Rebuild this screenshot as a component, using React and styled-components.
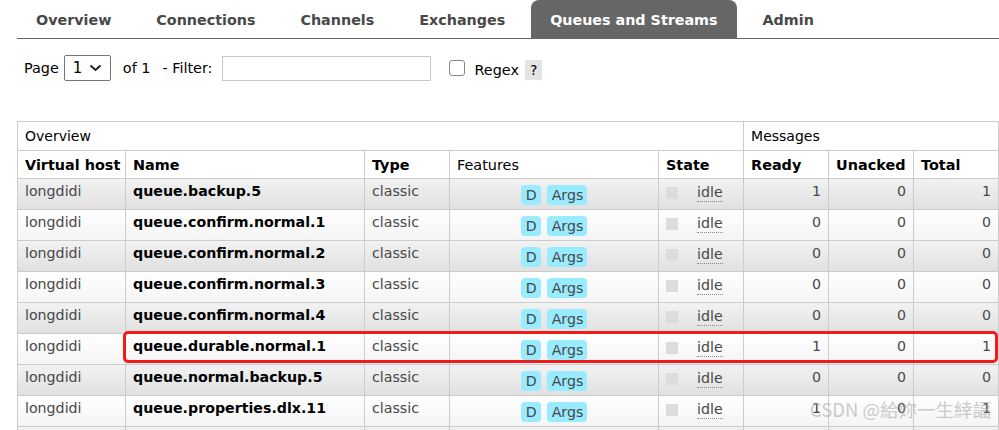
import React from 'react';
import styled, { createGlobalStyle } from 'styled-components';

const GlobalStyle = createGlobalStyle`
  html, body {
    margin: 0;
    padding: 0;
    background: #fff;
  }
  body {
    font-family: Verdana, "DejaVu Sans", sans-serif;
    color: #000;
  }
`;

const tabs = ['Overview', 'Connections', 'Channels', 'Exchanges', 'Queues and Streams', 'Admin'];

const queues = [
  { name: 'queue.backup.5', ready: 1, unacked: 0, total: 1 },
  { name: 'queue.confirm.normal.1', ready: 0, unacked: 0, total: 0 },
  { name: 'queue.confirm.normal.2', ready: 0, unacked: 0, total: 0 },
  { name: 'queue.confirm.normal.3', ready: 0, unacked: 0, total: 0 },
  { name: 'queue.confirm.normal.4', ready: 0, unacked: 0, total: 0 },
  { name: 'queue.durable.normal.1', ready: 1, unacked: 0, total: 1 },
  { name: 'queue.normal.backup.5', ready: 0, unacked: 0, total: 0 },
  { name: 'queue.properties.dlx.11', ready: 1, unacked: 0, total: 1 },
  { name: 'queue.properties.dlx.12', ready: 0, unacked: 0, total: 0 },
];

const App = () => (
  <>
    <GlobalStyle />
    <Page>
      <TabBar>
        {tabs.map((t) => (
          <Tab key={t} active={t === 'Queues and Streams'}>{t}</Tab>
        ))}
      </TabBar>

      <FilterRow>
        <span>Page</span>
        <Select>
          <span>1</span>
          <svg width="13" height="8" viewBox="0 0 13 8">
            <path d="M1.5 1.5 L6.5 6 L11.5 1.5" fill="none" stroke="#222" strokeWidth="2" />
          </svg>
        </Select>
        <OfText>of 1</OfText>
        <span>- Filter:</span>
        <FilterInput />
        <Check />
        <RegexLabel>Regex</RegexLabel>
        <Help>?</Help>
      </FilterRow>

      <TableWrap>
        <Table>
          <colgroup>
            <col style={{ width: 108 }} />
            <col style={{ width: 239 }} />
            <col style={{ width: 85 }} />
            <col style={{ width: 209 }} />
            <col style={{ width: 85 }} />
            <col style={{ width: 85 }} />
            <col style={{ width: 85 }} />
            <col style={{ width: 85 }} />
          </colgroup>
          <thead>
            <GroupRow>
              <GroupTh colSpan={5}>Overview</GroupTh>
              <GroupTh colSpan={3}>Messages</GroupTh>
            </GroupRow>
            <HeadRow>
              <Th>Virtual host</Th>
              <Th>Name</Th>
              <Th>Type</Th>
              <Th light>Features</Th>
              <Th>State</Th>
              <Th>Ready</Th>
              <Th>Unacked</Th>
              <Th>Total</Th>
            </HeadRow>
          </thead>
          <tbody>
            {queues.map((q, i) => (
              <Row key={q.name} odd={i % 2 === 0}>
                <Td>longdidi</Td>
                <NameTd>{q.name}</NameTd>
                <Td>classic</Td>
                <FeatTd>
                  <Badge>D</Badge>
                  <Badge>Args</Badge>
                </FeatTd>
                <Td>
                  <StateCell>
                    <StateBox />
                    <Idle>idle</Idle>
                  </StateCell>
                </Td>
                <NumTd>{q.ready}</NumTd>
                <NumTd>{q.unacked}</NumTd>
                <NumTd>{q.total}</NumTd>
              </Row>
            ))}
          </tbody>
        </Table>
        <Highlight />
        <Watermark>CSDN @給妳一生緈諨</Watermark>
      </TableWrap>
    </Page>
  </>
);

export default App;

const Page = styled.div`
  width: 999px;
  height: 430px;
  overflow: hidden;
  padding-left: 17px;
  box-sizing: border-box;
`;

const TabBar = styled.div`
  display: flex;
  align-items: flex-end;
  height: 38px;
  border-bottom: 1px solid #666;
`;

const Tab = styled.div`
  height: 38px;
  box-sizing: border-box;
  padding: 12px 19px 0;
  margin-right: 7px;
  font-size: 14.3px;
  font-weight: bold;
  color: ${(p) => (p.active ? '#fff' : '#484848')};
  background: ${(p) => (p.active ? '#666' : 'transparent')};
  border-radius: 8px 8px 0 0;
  white-space: nowrap;
`;

const FilterRow = styled.div`
  display: flex;
  align-items: center;
  height: 60px;
  padding: 0 0 2px 7px;
  box-sizing: border-box;
  font-size: 14.4px;
  color: #000;
`;

const Select = styled.div`
  display: flex;
  align-items: center;
  justify-content: space-between;
  width: 47px;
  height: 26px;
  box-sizing: border-box;
  border: 1px solid #767676;
  border-radius: 2px;
  margin: 0 12px 0 5px;
  padding: 0 8px;
  font-size: 15px;
`;

const OfText = styled.span`
  margin-right: 12px;
`;

const FilterInput = styled.div`
  width: 209px;
  height: 25px;
  box-sizing: border-box;
  border: 1px solid #c8c8c8;
  margin-left: 10px;
`;

const Check = styled.div`
  width: 16px;
  height: 16px;
  box-sizing: border-box;
  border: 1.5px solid #888;
  border-radius: 3px;
  margin: 0 9px 0 18px;
`;

const RegexLabel = styled.span`
  margin-top: 4px;
`;

const Help = styled.span`
  background: #e4e4e4;
  padding: 2px 5px;
  margin-left: 6px;
  margin-top: 4px;
  font-size: 14px;
`;

const TableWrap = styled.div`
  position: relative;
  margin-top: 22px;
`;

const Table = styled.table`
  border-collapse: collapse;
  table-layout: fixed;
  width: 981px;
  font-size: 14.2px;
`;

const GroupRow = styled.tr`
  height: 29px;
`;

const HeadRow = styled.tr`
  height: 28px;
`;

const GroupTh = styled.th`
  text-align: left;
  font-weight: normal;
  padding: 0 7px;
  border: 1px solid #ccc;
  font-size: 14px;
`;

const Th = styled.th`
  text-align: left;
  font-weight: ${(p) => (p.light ? 'normal' : 'bold')};
  padding: 1px 7px 0;
  border: 1px solid #ccc;
  white-space: nowrap;
  font-size: 14.4px;
`;

const Row = styled.tr`
  height: 31px;
  background: ${(p) =>
    p.odd ? 'linear-gradient(#f2f2f2, #e0e0e0)' : 'linear-gradient(#fff, #f4f4f4)'};
`;

const Td = styled.td`
  border: 1px solid #ccc;
  padding: 0 7px 6px;
  color: #484848;
  white-space: nowrap;
  vertical-align: middle;
`;

const NameTd = styled(Td)`
  color: #000;
  font-weight: bold;
  font-size: 14.2px;
`;

const FeatTd = styled(Td)`
  text-align: center;
  padding-bottom: 0;
  padding-top: 2px;
`;

const NumTd = styled(Td)`
  text-align: right;
`;

const Badge = styled.span`
  display: inline-block;
  background: #99ebff;
  color: #484848;
  border-radius: 4px;
  padding: 2px 4px 2px 5px;
  margin: 0 3px;
  font-size: 14.2px;
`;

const StateCell = styled.div`
  display: flex;
  align-items: center;
  gap: 19px;
`;

const StateBox = styled.span`
  width: 12px;
  height: 12px;
  background: #dcdcdc;
  margin-top: 4px;
`;

const Idle = styled.span`
  border-bottom: 1px dotted #888;
  color: #484848;
  margin-top: 4px;
  line-height: 1.15;
`;

const Highlight = styled.div`
  position: absolute;
  left: 106px;
  top: 210px;
  width: 875px;
  height: 32px;
  box-sizing: border-box;
  border: 3px solid #f01c1c;
  border-radius: 5px;
  pointer-events: none;
`;

const Watermark = styled.div`
  position: absolute;
  left: 793px;
  top: 277px;
  font-family: "Noto Sans CJK TC", "DejaVu Sans", sans-serif;
  font-size: 18.5px;
  line-height: 1.2;
  color: rgba(160, 160, 160, 0.55);
  white-space: nowrap;
  pointer-events: none;
`;
